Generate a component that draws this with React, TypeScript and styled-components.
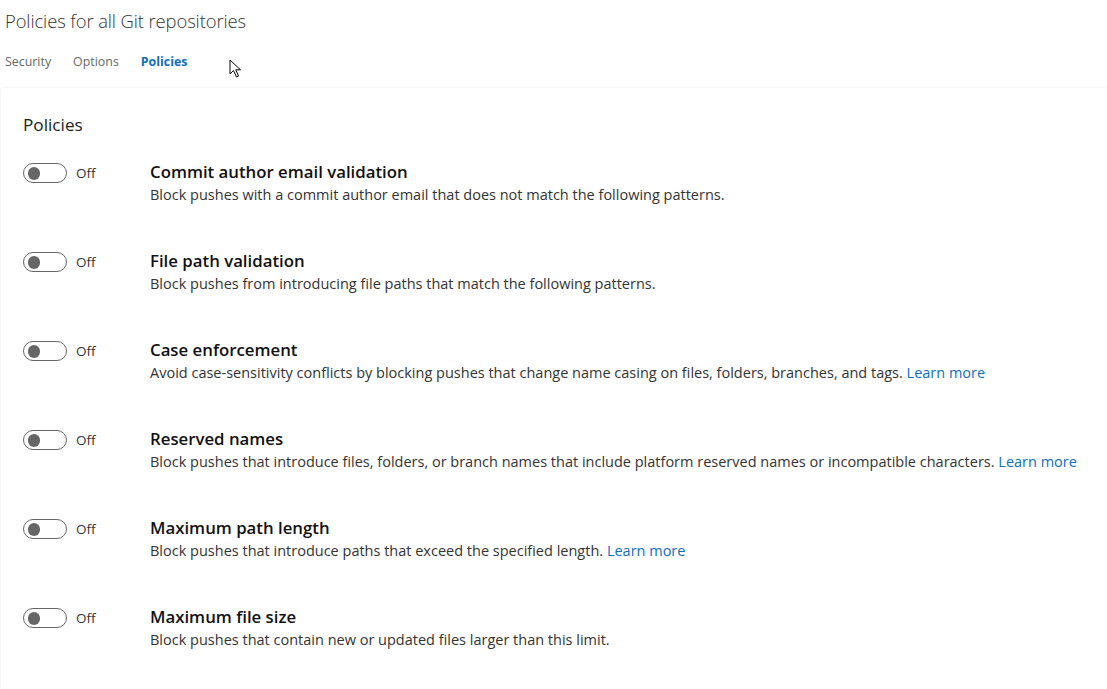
import React from "react";
import styled, { createGlobalStyle } from "styled-components";

const Global = createGlobalStyle`
  html, body { margin: 0; padding: 0; background: #ffffff; }
  body { font-family: "Open Sans", "Noto Sans", sans-serif; color: #333; }
  * { box-sizing: border-box; }
`;

const Page = styled.div`
  position: relative;
  width: 1107px;
  height: 689px;
  overflow: hidden;
  display: flex;
  flex-direction: column;
`;

const Title = styled.h1`
  margin: 0;
  padding: 8px 0 0 5px;
  height: 34px;
  flex-shrink: 0;
  font-size: 18.4px;
  font-weight: 300;
  color: #333;
  line-height: 26px;
  letter-spacing: -0.1px;
`;

const Tabs = styled.nav`
  display: flex;
  gap: 22px;
  padding: 19px 0 0 5px;
  height: 54px;
  flex-shrink: 0;
`;

const Tab = styled.span<{ $active?: boolean }>`
  font-size: 12.4px;
  line-height: 18px;
  height: 18px;
  font-weight: ${(p) => (p.$active ? 700 : 400)};
  color: ${(p) => (p.$active ? "#106ebe" : "#666")};
`;

const Card = styled.section`
  margin-left: 1px;
  flex: 1 0 auto;
  background: #fff;
  box-shadow: 0 0 3px rgba(0, 0, 0, 0.1);
  border-radius: 2px;
  padding: 25px 22px 0 22px;
`;

const CardTitle = styled.h2`
  margin: 0;
  font-size: 17.2px;
  font-weight: 400;
  color: #222;
  line-height: 24px;
`;

const List = styled.div`
  display: flex;
  flex-direction: column;
  padding-top: 23px;
`;

const Row = styled.div`
  display: flex;
  align-items: flex-start;
  height: 89px;
  flex-shrink: 0;
`;

const ToggleWrap = styled.div`
  display: flex;
  align-items: center;
  width: 127px;
  gap: 9px;
  padding-top: 3px;
`;

const Track = styled.span`
  position: relative;
  width: 44px;
  height: 20px;
  border: 1px solid #666;
  border-radius: 10px;
  display: inline-block;
  &::after {
    content: "";
    position: absolute;
    left: 3.5px;
    top: 3px;
    width: 12.5px;
    height: 12.5px;
    border-radius: 50%;
    background: #666;
  }
`;

const ToggleLabel = styled.span`
  font-size: 13.5px;
  color: #333;
`;

const Text = styled.div`
  display: flex;
  flex-direction: column;
`;

const RowTitle = styled.div`
  font-size: 16.8px;
  font-weight: 600;
  color: #111;
  line-height: 24px;
`;

const Desc = styled.div`
  font-size: 14.5px;
  color: #333;
  line-height: 22px;
`;

const Link = styled.a`
  color: #106ebe;
  text-decoration: none;
`;

const Cursor = styled.svg`
  position: absolute;
  left: 229px;
  top: 59px;
`;

const policies = [
  {
    title: "Commit author email validation",
    desc: "Block pushes with a commit author email that does not match the following patterns.",
    link: false,
  },
  {
    title: "File path validation",
    desc: "Block pushes from introducing file paths that match the following patterns.",
    link: false,
  },
  {
    title: "Case enforcement",
    desc: "Avoid case-sensitivity conflicts by blocking pushes that change name casing on files, folders, branches, and tags.",
    link: true,
  },
  {
    title: "Reserved names",
    desc: "Block pushes that introduce files, folders, or branch names that include platform reserved names or incompatible characters.",
    link: true,
  },
  {
    title: "Maximum path length",
    desc: "Block pushes that introduce paths that exceed the specified length.",
    link: true,
  },
  {
    title: "Maximum file size",
    desc: "Block pushes that contain new or updated files larger than this limit.",
    link: false,
  },
];

export default function App() {
  return (
    <Page>
      <Global />
      <Title>Policies for all Git repositories</Title>
      <Tabs>
        <Tab>Security</Tab>
        <Tab>Options</Tab>
        <Tab $active>Policies</Tab>
      </Tabs>
      <Card>
        <CardTitle>Policies</CardTitle>
        <List>
          {policies.map((p) => (
            <Row key={p.title}>
              <ToggleWrap>
                <Track />
                <ToggleLabel>Off</ToggleLabel>
              </ToggleWrap>
              <Text>
                <RowTitle>{p.title}</RowTitle>
                <Desc>
                  {p.desc}
                  {p.link && (
                    <>
                      {" "}
                      <Link href="#">Learn more</Link>
                    </>
                  )}
                </Desc>
              </Text>
            </Row>
          ))}
        </List>
      </Card>
      <Cursor width="14" height="20" viewBox="0 0 14 20">
        <path
          d="M1 1 L1 15 L4.5 11.5 L7.5 18 L9.5 17 L6.8 10.8 L11.5 10.8 Z"
          fill="#fff"
          stroke="#000"
          strokeWidth="1"
          strokeLinejoin="round"
        />
      </Cursor>
    </Page>
  );
}
